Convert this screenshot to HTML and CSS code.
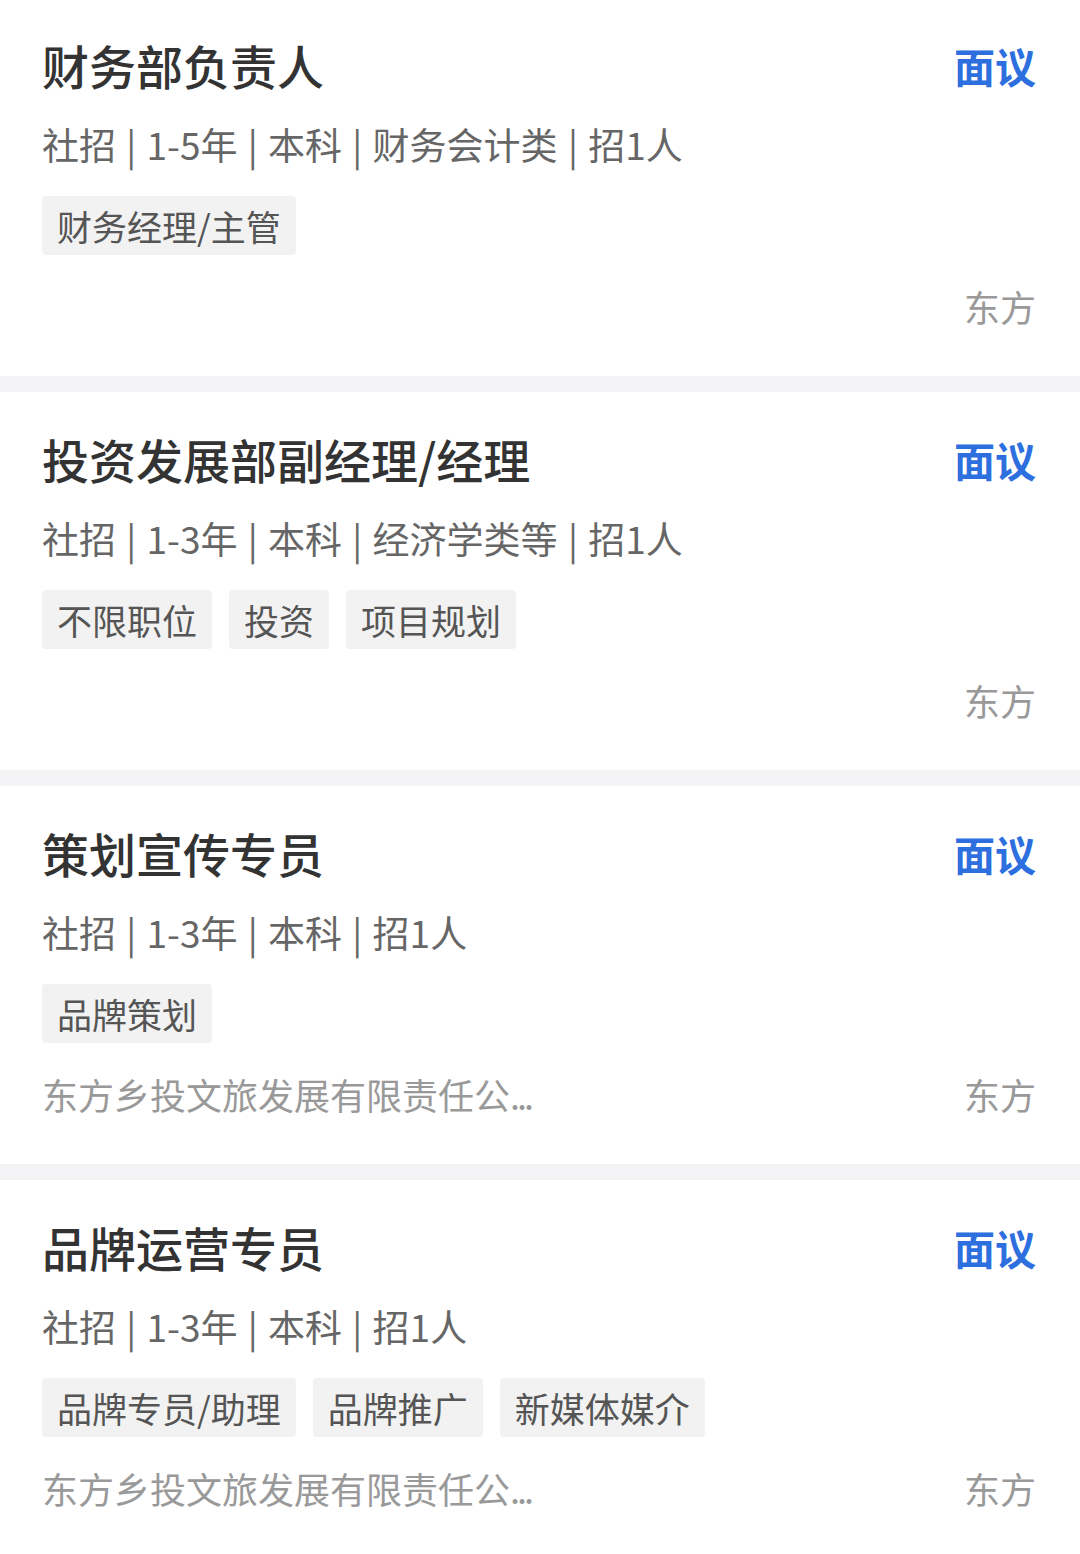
FILE: index.html
```html
<!DOCTYPE html>
<html lang="zh-CN">
<head>
    <meta charset="UTF-8" />
    <meta name="viewport" content="width=device-width, initial-scale=1" />
    <title>职位列表</title>
    <link rel="stylesheet" href="styles.css">
</head>
<body>
    <div class="job-list">
        <div class="job-card">
            <div class="job-head">
                <h2 class="job-title">财务部负责人</h2>
                <span class="job-salary">面议</span>
            </div>
            <p class="job-meta">社招 | 1-5年 | 本科 | 财务会计类 | 招1人</p>
            <div class="job-tags">
                <span class="tag">财务经理/主管</span>
            </div>
            <div class="job-foot">
                <span class="company"></span>
                <span class="city">东方</span>
            </div>
        </div>

        <div class="job-card">
            <div class="job-head">
                <h2 class="job-title">投资发展部副经理/经理</h2>
                <span class="job-salary">面议</span>
            </div>
            <p class="job-meta">社招 | 1-3年 | 本科 | 经济学类等 | 招1人</p>
            <div class="job-tags">
                <span class="tag">不限职位</span>
                <span class="tag">投资</span>
                <span class="tag">项目规划</span>
            </div>
            <div class="job-foot">
                <span class="company"></span>
                <span class="city">东方</span>
            </div>
        </div>

        <div class="job-card">
            <div class="job-head">
                <h2 class="job-title">策划宣传专员</h2>
                <span class="job-salary">面议</span>
            </div>
            <p class="job-meta">社招 | 1-3年 | 本科 | 招1人</p>
            <div class="job-tags">
                <span class="tag">品牌策划</span>
            </div>
            <div class="job-foot">
                <span class="company">东方乡投文旅发展有限责任公<span class="dots">...</span></span>
                <span class="city">东方</span>
            </div>
        </div>

        <div class="job-card">
            <div class="job-head">
                <h2 class="job-title">品牌运营专员</h2>
                <span class="job-salary">面议</span>
            </div>
            <p class="job-meta">社招 | 1-3年 | 本科 | 招1人</p>
            <div class="job-tags">
                <span class="tag">品牌专员/助理</span>
                <span class="tag">品牌推广</span>
                <span class="tag">新媒体媒介</span>
            </div>
            <div class="job-foot">
                <span class="company">东方乡投文旅发展有限责任公<span class="dots">...</span></span>
                <span class="city">东方</span>
            </div>
        </div>
    </div>
</body>
</html>
```

FILE: styles.css
```css
:root {
    --page-bg: #f3f3f6;
    --card-bg: #ffffff;
    --title: #333333;
    --meta: #666666;
    --muted: #999999;
    --tag-bg: #f2f2f2;
    --tag-text: #555555;
    --blue: #2d6fdf;
}

* {
    box-sizing: border-box;
    margin: 0;
    padding: 0;
}

body {
    font-family: "Noto Sans CJK SC", "Noto Sans", sans-serif;
    background: var(--page-bg);
    color: var(--title);
}

/* the list is scrolled a little, so the first card is cut at the top */
.job-list {
    display: flex;
    flex-direction: column;
    gap: 16px;
    margin-top: -2px;
}

.job-card {
    background: var(--card-bg);
    padding: 39px 44px 45px 42px;
}

.job-head {
    display: flex;
    justify-content: space-between;
    align-items: center;
    height: 56px;
}

.job-title {
    font-size: 47px;
    line-height: 56px;
    font-weight: 500;
    color: var(--title);
}

.job-salary {
    font-size: 41px;
    font-weight: 700;
    color: var(--blue);
}

.job-meta {
    margin-top: 26px;
    font-size: 37px;
    line-height: 50px;
    word-spacing: 2px;
    color: var(--meta);
}

.job-tags {
    display: flex;
    gap: 17px;
    margin-top: 27px;
}

.tag {
    height: 59px;
    line-height: 59px;
    padding: 0 15px;
    font-size: 35px;
    color: var(--tag-text);
    background: var(--tag-bg);
    border-radius: 4px;
}

.job-foot {
    display: flex;
    justify-content: space-between;
    margin-top: 26px;
    font-size: 36px;
    line-height: 50px;
    color: var(--muted);
}

.dots {
    letter-spacing: -3px;
}
```
